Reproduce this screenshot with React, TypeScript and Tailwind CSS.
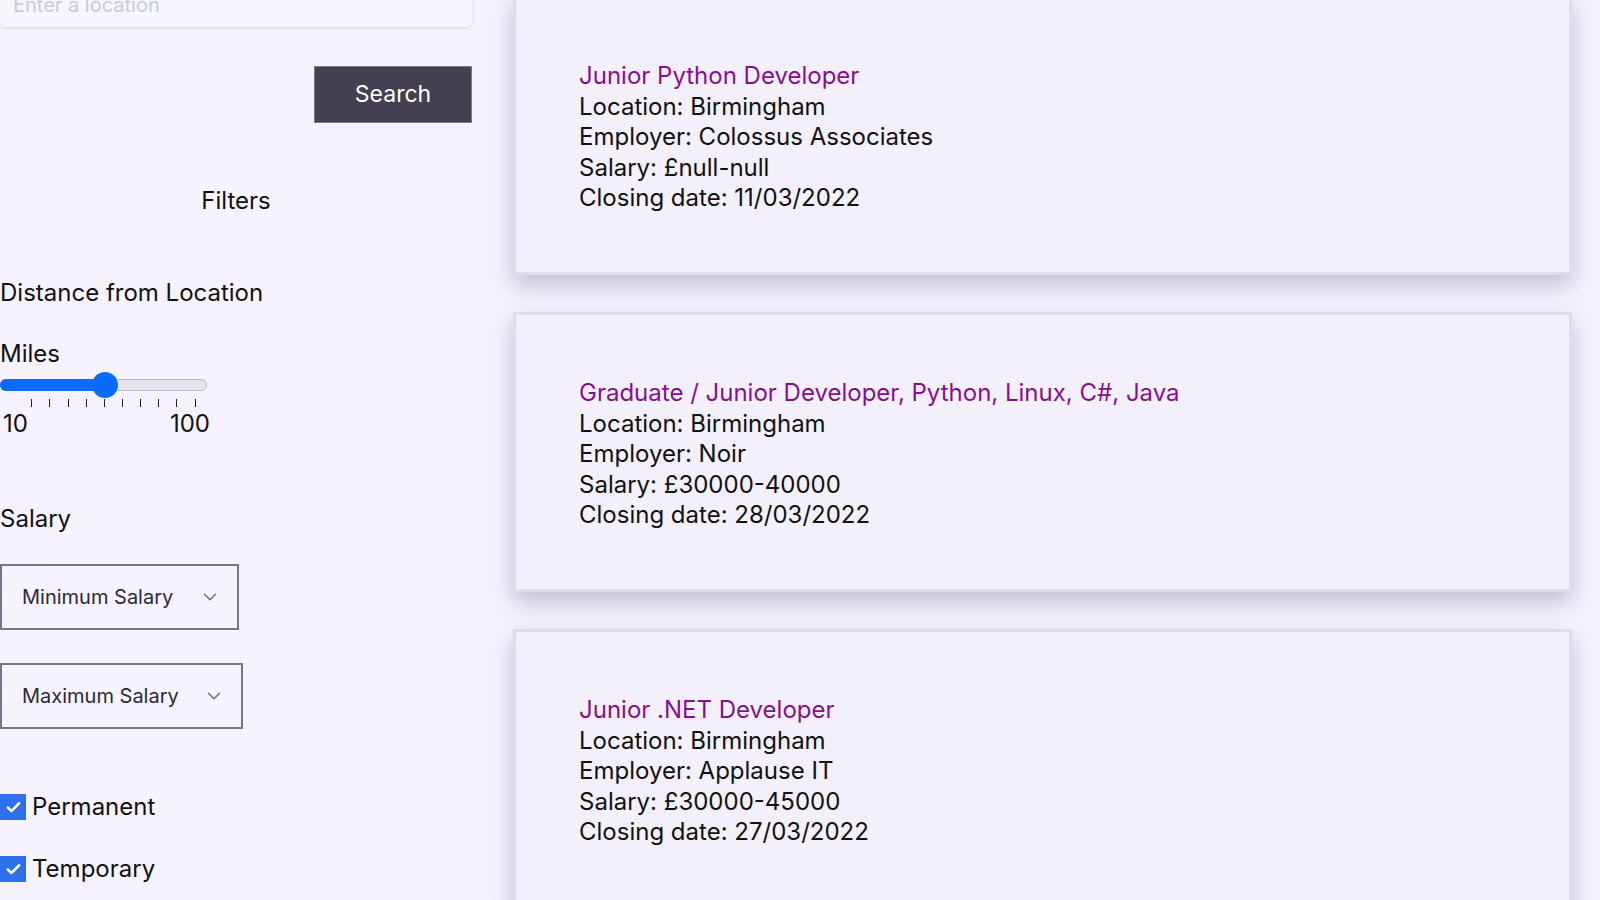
import { ChevronDown, Check } from "lucide-react";

interface Job {
  title: string;
  location: string;
  employer: string;
  salary: string;
  closing: string;
}

const jobs: Job[] = [
  {
    title: "Junior Python Developer",
    location: "Birmingham",
    employer: "Colossus Associates",
    salary: "£null-null",
    closing: "11/03/2022",
  },
  {
    title: "Graduate / Junior Developer, Python, Linux, C#, Java",
    location: "Birmingham",
    employer: "Noir",
    salary: "£30000-40000",
    closing: "28/03/2022",
  },
  {
    title: "Junior .NET Developer",
    location: "Birmingham",
    employer: "Applause IT",
    salary: "£30000-45000",
    closing: "27/03/2022",
  },
];

function MilesSlider() {
  const ticks = [31, 49, 68, 86, 104, 122, 140, 158, 176, 195];
  return (
    <div className="w-[210px]">
      <div className="relative h-[26px]">
        <div className="absolute left-0 top-[7px] h-[12px] w-[207px] rounded-full border border-[#b9b6c6] bg-[#e7e4ef]" />
        <div className="absolute left-0 top-[7px] h-[12px] w-[104px] rounded-l-full bg-[#0a6cff]" />
        <div className="absolute left-[92px] top-0 h-[26px] w-[26px] rounded-full bg-[#0a6cff]" />
      </div>
      <div className="relative h-[10px]">
        {ticks.map((x) => (
          <div key={x} className="absolute top-[1px] h-[8px] w-px bg-[#222]" style={{ left: x }} />
        ))}
      </div>
      <div className="mt-[2px] flex justify-between text-[24px] leading-[28px] text-[#111]">
        <span className="pl-[3px]">10</span>
        <span>100</span>
      </div>
    </div>
  );
}

function SalarySelect({ label, width }: { label: string; width: string }) {
  return (
    <div
      className={`flex h-[66px] items-center justify-between border-2 border-[#77738a] pl-[20px] pr-[16px] text-[20px] text-[#2d2a3a] ${width}`}
    >
      <span>{label}</span>
      <ChevronDown size={22} strokeWidth={1.6} className="text-[#6b6880]" />
    </div>
  );
}

function CheckRow({ label }: { label: string }) {
  return (
    <div className="flex items-center gap-[6px]">
      <div className="flex h-[26px] w-[26px] items-center justify-center bg-[#2f6fea]">
        <Check size={17} strokeWidth={3.5} className="text-white" />
      </div>
      <span className="text-[24px] leading-[30px] text-[#111]">{label}</span>
    </div>
  );
}

function JobCard({ job }: { job: Job }) {
  return (
    <div className="h-[280px] border-[3px] border-[#e0dcec] bg-[#f3f0fc] pl-[63px] pt-[63px] shadow-[0_10px_22px_rgba(60,50,90,0.28)]">
      <div className="text-[24px] leading-[30.5px] text-[#111]">
        <div className="text-[#870f8f]">{job.title}</div>
        <div>Location: {job.location}</div>
        <div>Employer: {job.employer}</div>
        <div>Salary: {job.salary}</div>
        <div>Closing date: {job.closing}</div>
      </div>
    </div>
  );
}

export default function App() {
  return (
    <div className="h-[900px] w-[1600px] overflow-hidden bg-[#f6f3fe] font-['Inter',sans-serif]">
      <div className="flex">
        <aside className="w-[472px] shrink-0 -mt-[17px]">
          <div className="flex h-[44px] items-center rounded-md bg-[#f7f5fe] px-[13px] text-[20px] text-[#c7cbe0] shadow-[0_1px_4px_rgba(0,0,0,0.12)]">
            Enter a location
          </div>
          <div className="mt-[39px] flex justify-end">
            <button className="h-[57px] w-[158px] border border-[#7c778c] bg-[#443f51] text-[23px] text-white">
              Search
            </button>
          </div>
          <div className="mt-[64px] text-center text-[24px] leading-[28px] text-[#111]">Filters</div>
          <div className="mt-[64px] text-[24px] leading-[28px] text-[#111]">Distance from Location</div>
          <div className="mt-[33px] text-[24px] leading-[28px] text-[#111]">Miles</div>
          <div className="mt-[4px]">
            <MilesSlider />
          </div>
          <div className="mt-[67px] text-[24px] leading-[28px] text-[#111]">Salary</div>
          <div className="mt-[31px]">
            <SalarySelect label="Minimum Salary" width="w-[239px]" />
          </div>
          <div className="mt-[33px]">
            <SalarySelect label="Maximum Salary" width="w-[243px]" />
          </div>
          <div className="mt-[63px] flex flex-col gap-[32px]">
            <CheckRow label="Permanent" />
            <CheckRow label="Temporary" />
          </div>
        </aside>
        <main className="ml-[41px] -mt-[5px] flex w-[1059px] flex-col gap-[37px]">
          {jobs.map((job) => (
            <JobCard key={job.title} job={job} />
          ))}
        </main>
      </div>
    </div>
  );
}
